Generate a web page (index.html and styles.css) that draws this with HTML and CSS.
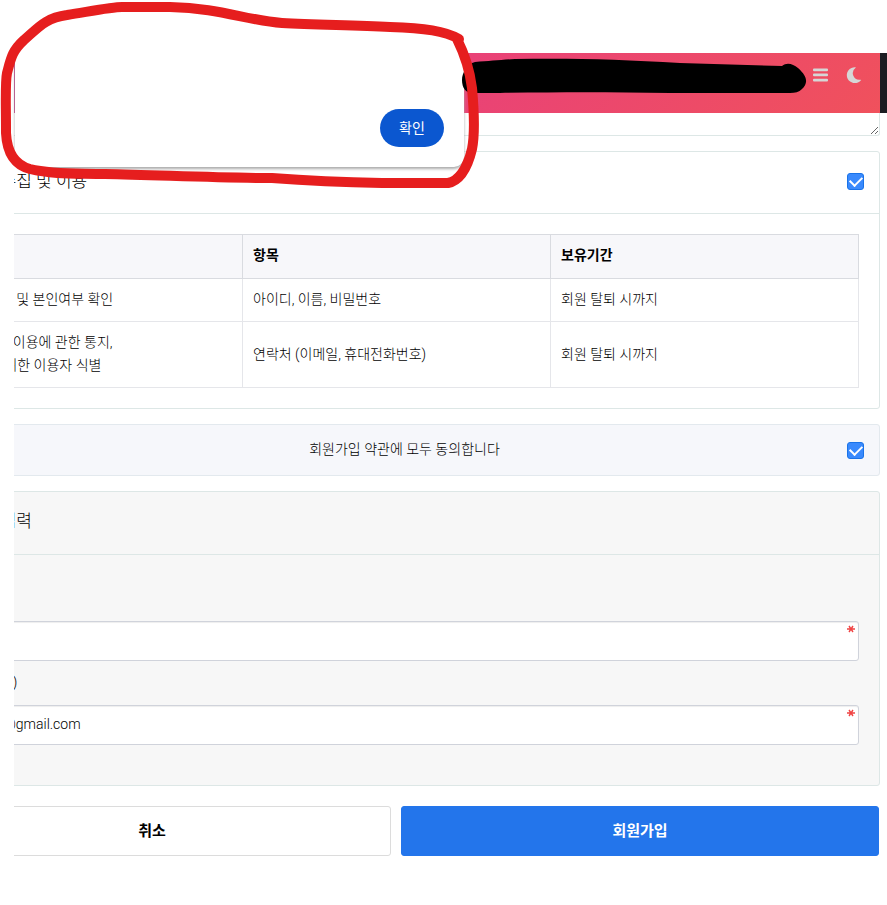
FILE: index.html
```html
<!DOCTYPE html>
<html lang="ko">
<head>
  <meta charset="UTF-8" />
  <meta name="viewport" content="width=device-width, initial-scale=1.0"/>
  <title>회원가입</title>
  <link rel="stylesheet" href="styles.css">
</head>
<body>

  <div class="screen">
    <header class="topbar">
      <div class="topbar-inner">
        <button class="icon-button" type="button" aria-label="메뉴">
          <svg width="16" height="16" viewBox="0 0 16 16" fill="#d6d6d6">
            <rect x="0" y="1.500" width="15" height="2.700" rx="1"/>
            <rect x="0" y="6.600" width="15" height="2.700" rx="1"/>
            <rect x="0" y="11.700" width="15" height="2.700" rx="1"/>
          </svg>
        </button>
        <button class="icon-button" type="button" aria-label="다크 모드">
          <svg width="16" height="16" viewBox="0 0 16 16" fill="#d6d6d6">
            <path d="M9.500 0.200A8 8 0 1 0 15.200 13Q15 12.600 14.200 12.700A6.500 6.500 0 0 1 9.400 1.100Q10.200 0.500 9.500 0.200Z"/>
          </svg>
        </button>
      </div>
    </header>

    <form class="register">
      <textarea class="terms" aria-label="회원가입약관" readonly></textarea>

      <section class="card">
        <div class="card-head">
          <h2><label for="agree-privacy">개인정보 수집 및 이용</label></h2>
          <input class="check" type="checkbox" id="agree-privacy" checked>
        </div>
        <div class="card-body">
          <table>
            <thead>
              <tr>
                <th>목적</th>
                <th>항목</th>
                <th>보유기간</th>
              </tr>
            </thead>
            <tbody>
              <tr>
                <td>이용자 식별 및 본인여부 확인</td>
                <td>아이디, 이름, 비밀번호</td>
                <td>회원 탈퇴 시까지</td>
              </tr>
              <tr>
                <td>고객서비스 이용에 관한 통지,<br>CS대응을 위한 이용자 식별</td>
                <td>연락처 (이메일, 휴대전화번호)</td>
                <td>회원 탈퇴 시까지</td>
              </tr>
            </tbody>
          </table>
        </div>
      </section>

      <div class="agree-all">
        <label for="agree-all">회원가입 약관에 모두 동의합니다</label>
        <input class="check" type="checkbox" id="agree-all" checked>
      </div>

      <section class="card card-gray">
        <div class="card-head">
          <h2>개인정보 입력</h2>
        </div>
        <div class="card-body fields">
          <label for="nick">닉네임</label>
          <div class="field">
            <input type="text" id="nick" required>
            <svg class="required" width="8" height="8" viewBox="0 0 8 8"><path d="M0 4H8M2 1L6 7M6 1L2 7"/></svg>
          </div>
          <label for="email">E-mail ( 필수 )</label>
          <div class="field">
            <input class="email" type="text" id="email" value="@gmail.com" required>
            <svg class="required" width="8" height="8" viewBox="0 0 8 8"><path d="M0 4H8M2 1L6 7M6 1L2 7"/></svg>
          </div>
        </div>
      </section>

      <div class="actions">
        <button class="cancel" type="button">취소</button>
        <button class="submit" type="submit">회원가입</button>
      </div>
    </form>
  </div>

  <div class="alert" role="alertdialog" aria-label="알림">
    <button type="button">확인</button>
  </div>

  <!-- marker strokes -->
  <svg class="marker" width="490" height="200" viewBox="0 0 490 200">
    <path class="red" d="M459 39C445 31 425 28 390 27C350 25 315 25 282 23C245 20 220 8 170 7H122C112 7 92 11 67 15C45 18 38 28 24 40C12 51 11 58 7 73C5 83 6 100 6 133C7 153 15 165 30 169C55 175 80 173 105 174C160 175 215 178 272 178C298 180 325 182 382 183H448C458 181 467 170 472 149C475 134 474 110 472 88C470 72 464 53 457 39Z"/>
  </svg>
  <svg class="marker blackout" width="820" height="200" viewBox="0 0 820 200">
    <path d="M462 80C462 73 467 64 475 62C490 61 500 60 515 59C565 58 620 59 680 63L782 66C787 62 793 64 798 68C808 77 808 83 802 89C799 92 795 93 790 93H670C610 92 560 92 500 93H472C466 93 462 88 462 80Z"/>
  </svg>

</body>
</html>
```
FILE: styles.css
```css
* {
  box-sizing: border-box;
}

body {
  margin: 0;
  background: #fff;
  color: #000;
  font-family: Roboto, "Noto Sans CJK KR", sans-serif;
  font-size: 14px;
  font-weight: 300;
  line-height: 23px;
}

button,
input,
textarea {
  font: inherit;
}

button {
  cursor: pointer;
}

.screen {
  margin: 53px 0 0 14px;
  overflow: hidden;
}

.topbar {
  background: #1b1d22;
  padding-right: 7px;
}

.topbar-inner {
  display: flex;
  justify-content: flex-end;
  gap: 17px;
  height: 60px;
  padding: 14px 18px;
  background: linear-gradient(135deg, #bd3c86, #e94277 50%, #f0515c);
}

.icon-button {
  width: 16px;
  height: 16px;
  padding: 0;
  border: 0;
  background: none;
}

.icon-button svg {
  display: block;
}

/* the form is wider than the visible area and runs off its left edge */
.register {
  margin: 0 7px 0 -101px;
}

.terms {
  display: block;
  width: 100%;
  height: 23px;
  border: 1px solid #dde7e6;
  border-top: 0;
  border-radius: 0 0 3px 3px;
  outline: 0;
  resize: vertical;
}

.card {
  margin-top: 15px;
  border: 1px solid #dde7e6;
  border-radius: 3px;
}

.card-gray {
  background: #f7f7f7;
}

.card-head {
  display: flex;
  align-items: center;
  justify-content: space-between;
  height: 62px;
  padding: 0 15px 3px 20px;
  border-bottom: 1px solid #dde7e6;
}

.card-gray .card-head {
  height: 63px;
}

.card-head h2 {
  margin: 0;
  font-size: 17px;
  font-weight: 300;
}

.card-body {
  padding: 20px;
}

.check {
  appearance: none;
  display: grid;
  place-items: center;
  width: 17px;
  height: 17px;
  margin: 0;
  border: 1px solid #1a73e8;
  border-radius: 3px;
  background: #fff;
}

.check:checked {
  background: #3a8afd;
}

.check:checked::after {
  content: "";
  width: 10px;
  height: 6px;
  margin-bottom: 3px;
  border: solid #fff;
  border-width: 0 0 2px 2px;
  transform: rotate(-45deg);
}

table {
  width: 100%;
  border-collapse: collapse;
  table-layout: fixed;
}

th,
td {
  padding: 9px 10px 10px;
  border: 1px solid #e5e6ea;
  text-align: left;
  white-space: nowrap;
}

th {
  padding-bottom: 11px;
  border-color: #d9dbe0;
  background: #f7f7fa;
  font-weight: 700;
}

.agree-all {
  display: flex;
  align-items: center;
  height: 52px;
  margin-top: 15px;
  padding: 1px 15px 0 20px;
  border: 1px solid #e3e9ee;
  border-radius: 3px;
  background: #f6f7fb;
}

.agree-all label {
  flex: 1;
  padding: 0 0 2px 28px;
  text-align: center;
}

.fields {
  padding: 32px 20px 40px;
}

.fields label {
  display: block;
  height: 44px;
  padding-top: 10px;
}

.fields label:first-child {
  height: 34px;
  padding: 0;
}

.field {
  position: relative;
}

.field input {
  display: block;
  width: 100%;
  height: 40px;
  padding: 0 10px 2px;
  border: 1px solid #d0d3db;
  border-radius: 3px;
  background: #fff;
  box-shadow: inset 0 1px 1px #eee;
  color: #000;
}

.field .email {
  padding-left: 68px;
}

.required {
  position: absolute;
  top: 4px;
  right: 4px;
  stroke: #f04444;
  stroke-width: 1.4;
}

.actions {
  display: grid;
  grid-template-columns: 1fr 1fr;
  gap: 10px;
  margin: 20px 1px 48px 0;
}

.actions button {
  height: 50px;
  padding-bottom: 1px;
  border: 1px solid #dcdcdc;
  border-radius: 3px;
  background: #fff;
  color: #000;
  font-size: 15px;
  font-weight: 700;
}

.actions .submit {
  border-color: #2375eb;
  background: #2375eb;
  color: #fff;
}

.alert {
  display: flex;
  align-items: flex-end;
  justify-content: flex-end;
  position: absolute;
  top: 53px;
  left: 15px;
  width: 449px;
  height: 114px;
  padding: 20px;
  border-radius: 0 0 10px 10px;
  background: #fff;
  box-shadow: 0 2px 3px #aaa;
  clip-path: inset(0 -8px -8px);
}

.alert button {
  width: 64px;
  height: 38px;
  padding: 0;
  border: 0;
  border-radius: 19px;
  background: #0b57d0;
  color: #fff;
  font-weight: 400;
}

.marker {
  position: absolute;
  top: 0;
  left: 0;
  z-index: 2;
  pointer-events: none;
}

.blackout {
  z-index: 1;
}

.red {
  fill: none;
  stroke: #e61e1e;
  stroke-width: 10;
  stroke-linejoin: round;
}
```
